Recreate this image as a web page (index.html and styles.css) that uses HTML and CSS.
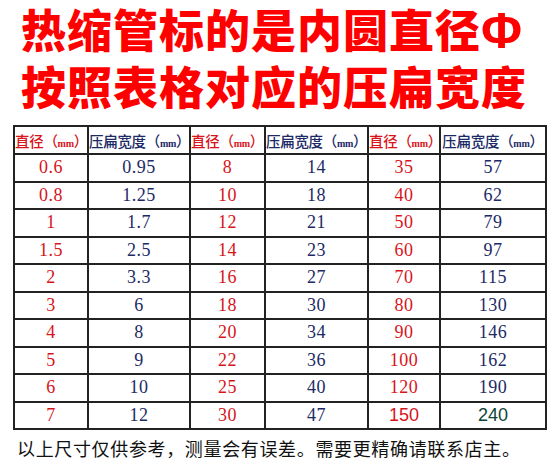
FILE: index.html
```html
<!DOCTYPE html>
<html>
<head>
    <meta charset="UTF-8">
    <meta name="viewport" content="width=device-width, initial-scale=1.0">
    <title>热缩管压扁宽度对照表</title>
    <link rel="stylesheet" href="styles.css">
</head>
<body>
    <div class="title">
        <div class="title-line">热缩管标的是内圆直径<span class="phi">Φ</span></div>
        <div class="title-line">按照表格对应的压扁宽度</div>
    </div>

    <table class="size-table">
        <colgroup>
            <col class="c1"><col class="c2"><col class="c3"><col class="c4"><col class="c5"><col class="c6">
        </colgroup>
        <thead>
            <tr>
                <th class="dia">直径（<small>mm</small>）</th>
                <th class="flat">压扁宽度（<small>mm</small>）</th>
                <th class="dia">直径（<small>mm</small>）</th>
                <th class="flat">压扁宽度（<small>mm</small>）</th>
                <th class="dia">直径（<small>mm</small>）</th>
                <th class="flat">压扁宽度（<small>mm</small>）</th>
            </tr>
        </thead>
        <tbody>
            <tr><td class="dia">0.6</td><td class="flat">0.95</td><td class="dia">8</td><td class="flat">14</td><td class="dia">35</td><td class="flat">57</td></tr>
            <tr><td class="dia">0.8</td><td class="flat">1.25</td><td class="dia">10</td><td class="flat">18</td><td class="dia">40</td><td class="flat">62</td></tr>
            <tr><td class="dia">1</td><td class="flat">1.7</td><td class="dia">12</td><td class="flat">21</td><td class="dia">50</td><td class="flat">79</td></tr>
            <tr><td class="dia">1.5</td><td class="flat">2.5</td><td class="dia">14</td><td class="flat">23</td><td class="dia">60</td><td class="flat">97</td></tr>
            <tr><td class="dia">2</td><td class="flat">3.3</td><td class="dia">16</td><td class="flat">27</td><td class="dia">70</td><td class="flat">115</td></tr>
            <tr><td class="dia">3</td><td class="flat">6</td><td class="dia">18</td><td class="flat">30</td><td class="dia">80</td><td class="flat">130</td></tr>
            <tr><td class="dia">4</td><td class="flat">8</td><td class="dia">20</td><td class="flat">34</td><td class="dia">90</td><td class="flat">146</td></tr>
            <tr><td class="dia">5</td><td class="flat">9</td><td class="dia">22</td><td class="flat">36</td><td class="dia">100</td><td class="flat">162</td></tr>
            <tr><td class="dia">6</td><td class="flat">10</td><td class="dia">25</td><td class="flat">40</td><td class="dia">120</td><td class="flat">190</td></tr>
            <tr><td class="dia">7</td><td class="flat">12</td><td class="dia">30</td><td class="flat">47</td><td class="dia sans">150</td><td class="green sans">240</td></tr>
        </tbody>
    </table>

    <p class="note">以上尺寸仅供参考，测量会有误差。需要更精确请联系店主。</p>
</body>
</html>
```

FILE: styles.css
```css
* {
    box-sizing: border-box;
    margin: 0;
    padding: 0;
}

body {
    width: 560px;
    height: 467px;
    overflow: hidden;
    background-color: #fff;
    font-family: "Noto Sans CJK SC", sans-serif;
}

.title {
    padding: 4px 0 0 21px;
    color: #ff0000;
    font-family: "Liberation Sans", "Noto Sans CJK SC", sans-serif;
    font-size: 45px;
    font-weight: 900;
    line-height: 57px;
    letter-spacing: 1px;
    white-space: nowrap;
}

.phi {
    font-size: 50px;
    line-height: 1;
}

.size-table {
    margin: 7px 0 0 13px;
    width: 532px;
    border-collapse: collapse;
    table-layout: fixed;
    border: 2px solid #222;
}

.c1 { width: 74px; }
.c2 { width: 102px; }
.c3 { width: 75px; }
.c4 { width: 103px; }
.c5 { width: 72px; }
.c6 { width: 106px; }

.size-table th,
.size-table td {
    border: 2px solid #222;
    text-align: center;
    vertical-align: middle;
    padding: 0;
    white-space: nowrap;
}

.size-table th {
    height: 28px;
    font-size: 14.5px;
    font-weight: 500;
    letter-spacing: -0.3px;
}

.size-table th small {
    font-size: 10px;
    font-family: "Liberation Serif", serif;
    font-weight: 700;
}

.size-table td {
    height: 27.5px;
    font-family: "Liberation Serif", serif;
    font-size: 18px;
    letter-spacing: 0.5px;
}

.dia {
    color: #d7141a;
}

.flat {
    color: #1c2a66;
}

.size-table td.sans {
    font-family: "Liberation Sans", sans-serif;
    font-size: 18px;
    letter-spacing: 0;
}

.green {
    color: #0d4536;
}

.note {
    margin: 6px 0 0 17px;
    font-size: 18px;
    line-height: 24px;
    letter-spacing: 0.65px;
    color: #111;
    white-space: nowrap;
}
```
